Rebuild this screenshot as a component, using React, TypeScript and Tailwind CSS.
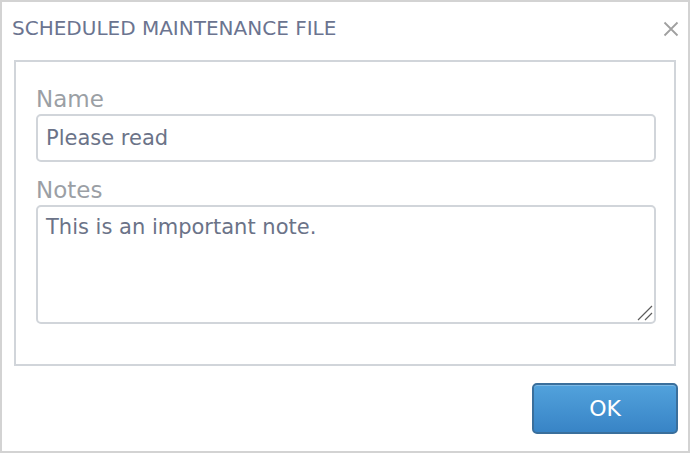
import { useState } from "react";

export default function App() {
	const [name, setName] = useState("Please read");
	const [notes, setNotes] = useState("This is an important note.");

	return (
		<div className="w-[690px] h-[453px] bg-white border-2 border-[#d3d3d3] flex flex-col font-['DejaVu_Sans',sans-serif]">
			{/* header */}
			<div className="h-[56px] flex items-start pl-[10px] pr-[9px] pt-[14px]">
				<div className="text-[20px] leading-[24px] text-[#6b7490]">
					SCHEDULED MAINTENANCE FILE
				</div>
				<button className="ml-auto mt-[4px] text-[#a0a0a0] w-[17px] h-[17px] flex items-center justify-center">
					<svg viewBox="0 0 16 16" className="w-[16px] h-[16px]">
						<path
							d="M1.5 1.5 L14.5 14.5 M14.5 1.5 L1.5 14.5"
							stroke="currentColor"
							strokeWidth="1.8"
							fill="none"
						/>
					</svg>
				</button>
			</div>

			{/* fields */}
			<div className="mx-[12px] mt-[2px] h-[306px] border-2 border-[#d1d5da] px-[20px] pt-[22px]">
				<label className="block text-[23px] leading-[30px] text-[#9b9fa5]">
					Name
				</label>
				<input
					value={name}
					onChange={(e) => setName(e.target.value)}
					className="block w-[620px] h-[48px] border-2 border-[#d1d5da] rounded-[5px] px-[8px] text-[21px] text-[#6b7388] outline-none"
				/>
				<label className="block mt-[13px] text-[23px] leading-[30px] text-[#9b9fa5]">
					Notes
				</label>
				<div className="relative w-[620px]">
					<textarea
						value={notes}
						onChange={(e) => setNotes(e.target.value)}
						className="block w-[620px] h-[119px] border-2 border-[#d1d5da] rounded-[5px] px-[8px] py-[5px] text-[21px] leading-[30px] text-[#6b7388] outline-none resize-none"
					/>
					{/* resize grip */}
					<svg
						viewBox="0 0 16 16"
						className="absolute right-[3px] bottom-[3px] w-[16px] h-[16px] pointer-events-none"
					>
						<path
							d="M1 15 L15 1 M8 15 L15 8"
							stroke="#5c5c5c"
							strokeWidth="1.2"
							fill="none"
						/>
					</svg>
				</div>
			</div>

			{/* footer */}
			<div className="flex justify-end pr-[10px] pt-[17px]">
				<button className="w-[146px] h-[51px] rounded-[5px] border-2 border-[#3a6f9c] bg-gradient-to-b from-[#52a2dc] to-[#3884c6] text-white text-[22px] shadow-[inset_0_1px_0_rgba(255,255,255,0.25)]">
					OK
				</button>
			</div>
		</div>
	);
}
